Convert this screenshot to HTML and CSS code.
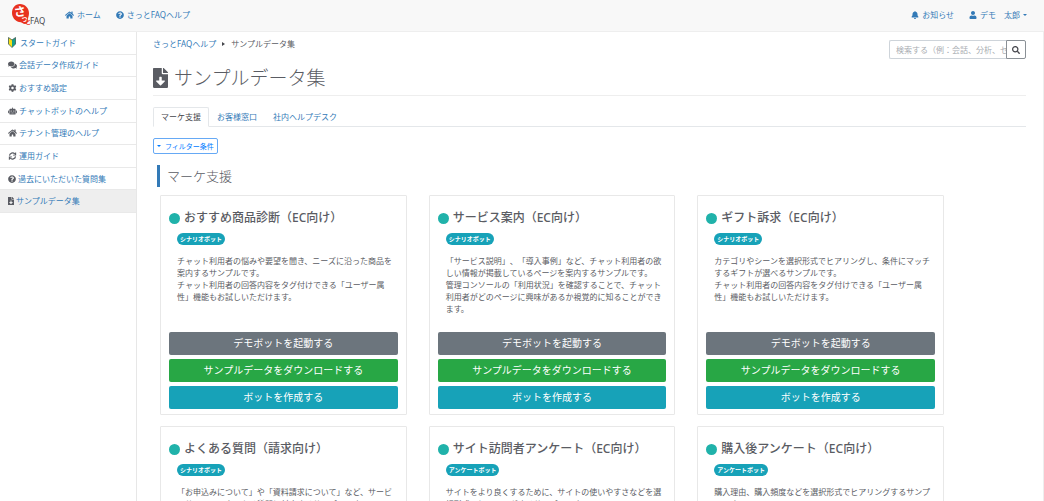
FILE: index.html
```
<!DOCTYPE html>
<html lang="ja">

<head>
    <meta charset="UTF-8">
    <meta name="viewport" content="width=device-width, initial-scale=1.0">
    <title>サンプルデータ集</title>
    <link rel="stylesheet" href="styles.css">
</head>

<body>
    <!-- icon set -->
    <svg class="icon-defs" aria-hidden="true">
        <symbol id="home" viewBox="0 0 576 512"><path d="M280.37 148.26L96 300.11V464a16 16 0 0 0 16 16l112.06-.29a16 16 0 0 0 15.92-16V368a16 16 0 0 1 16-16h64a16 16 0 0 1 16 16v95.64a16 16 0 0 0 16 16.05L464 480a16 16 0 0 0 16-16V300L295.67 148.26a12.19 12.19 0 0 0-15.3 0zM571.6 251.47L488 182.56V44.05a12 12 0 0 0-12-12h-56a12 12 0 0 0-12 12v72.61L318.47 43a48 48 0 0 0-61 0L4.34 251.47a12 12 0 0 0-1.6 16.9l25.5 31A12 12 0 0 0 45.15 301l235.22-193.74a12.19 12.19 0 0 1 15.3 0L530.9 301a12 12 0 0 0 16.9-1.6l25.5-31a12 12 0 0 0-1.7-16.93z"/></symbol>
        <symbol id="question" viewBox="0 0 512 512"><path d="M504 256c0 136.997-111.043 248-248 248S8 392.997 8 256C8 119.083 119.043 8 256 8s248 111.083 248 248zM262.655 90c-54.497 0-89.255 22.957-116.549 63.758-3.536 5.286-2.353 12.415 2.715 16.258l34.699 26.31c5.205 3.947 12.621 3.008 16.665-2.122 17.864-22.658 30.113-35.797 57.303-35.797 20.429 0 45.698 13.148 45.698 32.958 0 14.976-12.363 22.667-32.534 33.976C247.128 238.528 216 254.941 216 296v4c0 6.627 5.373 12 12 12h56c6.627 0 12-5.373 12-12v-1.333c0-28.462 83.186-29.647 83.186-106.667 0-58.002-60.165-102-116.531-102zM256 338c-25.365 0-46 20.635-46 46 0 25.364 20.635 46 46 46s46-20.636 46-46c0-25.365-20.635-46-46-46z"/></symbol>
        <symbol id="bell" viewBox="0 0 448 512"><path d="M224 512c35.32 0 63.97-28.65 63.97-64H160.03c0 35.35 28.65 64 63.97 64zm215.39-149.71c-19.32-20.76-55.47-51.99-55.47-154.29 0-77.7-54.48-139.9-127.94-155.16V32c0-17.67-14.32-32-31.98-32s-31.98 14.33-31.98 32v20.84C118.56 68.1 64.08 130.3 64.08 208c0 102.3-36.15 133.53-55.47 154.29-6 6.45-8.66 14.16-8.61 21.71.11 16.4 12.98 32 32.1 32h383.8c19.12 0 32-15.6 32.1-32 .05-7.55-2.61-15.27-8.61-21.71z"/></symbol>
        <symbol id="user" viewBox="0 0 448 512"><path d="M224 256c70.7 0 128-57.3 128-128S294.7 0 224 0 96 57.3 96 128s57.3 128 128 128zm89.6 32h-16.7c-22.2 10.2-46.9 16-72.9 16s-50.6-5.8-72.9-16h-16.7C60.2 288 0 348.2 0 422.4V464c0 26.5 21.5 48 48 48h352c26.5 0 48-21.5 48-48v-41.6c0-74.2-60.2-134.4-134.4-134.4z"/></symbol>
        <symbol id="comments" viewBox="0 0 576 512"><path d="M416 192c0-88.4-93.1-160-208-160S0 103.6 0 192c0 34.3 14.1 65.9 38 92-13.4 30.2-35.5 54.2-35.8 54.5-2.2 2.3-2.8 5.7-1.5 8.7S4.8 352 8 352c36.6 0 66.9-12.3 88.7-25 32.2 15.7 70.3 25 111.3 25 114.9 0 208-71.6 208-160zm122 220c23.9-26 38-57.7 38-92 0-66.9-53.5-124.2-129.3-148.1.9 6.6 1.3 13.3 1.3 20.1 0 105.9-107.7 192-240 192-10.8 0-21.3-.8-31.7-1.9C207.8 439.6 281.8 480 368 480c41 0 79.1-9.2 111.3-25 21.8 12.7 52.1 25 88.7 25 3.2 0 6.1-1.9 7.3-4.8 1.3-2.9.7-6.3-1.5-8.7-.3-.3-22.4-24.2-35.8-54.5z"/></symbol>
        <symbol id="cog" viewBox="0 0 512 512"><path d="M487.4 315.7l-42.6-24.6c4.3-23.2 4.3-47 0-70.2l42.6-24.6c4.9-2.8 7.1-8.6 5.5-14-11.1-35.6-30-67.8-54.7-94.6-3.8-4.1-10-5.1-14.8-2.3L380.8 110c-17.9-15.4-38.5-27.3-60.8-35.1V25.8c0-5.6-3.9-10.5-9.4-11.7-36.7-8.2-74.3-7.8-109.2 0-5.5 1.2-9.4 6.1-9.4 11.7V75c-22.2 7.9-42.8 19.8-60.8 35.1L88.7 85.5c-4.9-2.8-11-1.9-14.8 2.3-24.7 26.7-43.6 58.9-54.7 94.6-1.7 5.4.6 11.2 5.5 14L67.3 221c-4.3 23.2-4.3 47 0 70.2l-42.6 24.6c-4.9 2.8-7.1 8.6-5.5 14 11.1 35.6 30 67.8 54.7 94.6 3.8 4.1 10 5.1 14.8 2.3l42.6-24.6c17.9 15.4 38.5 27.3 60.8 35.1v49.2c0 5.6 3.9 10.5 9.4 11.7 36.7 8.2 74.3 7.8 109.2 0 5.5-1.2 9.4-6.1 9.4-11.7v-49.2c22.2-7.9 42.8-19.8 60.8-35.1l42.6 24.6c4.9 2.8 11 1.9 14.8-2.3 24.7-26.7 43.6-58.9 54.7-94.6 1.5-5.5-.7-11.3-5.6-14.1zM256 336c-44.1 0-80-35.9-80-80s35.9-80 80-80 80 35.9 80 80-35.9 80-80 80z"/></symbol>
        <symbol id="robot" viewBox="0 0 640 512"><path fill-rule="evenodd" d="M0 256v128c0 18 14 32 32 32h32V224H32c-18 0-32 14-32 32zM608 224h-32v192h32c18 0 32-14 32-32V256c0-18-14-32-32-32zM288 96V32a32 32 0 0 1 64 0v64h112c44 0 80 36 80 80v272c0 35-29 64-64 64H160c-35 0-64-29-64-64V176c0-44 36-80 80-80zM224 216a40 40 0 1 0 0 80 40 40 0 0 0 0-80zM416 216a40 40 0 1 0 0 80 40 40 0 0 0 0-80zM192 384h64v32h-64zM288 384h64v32h-64zM384 384h64v32h-64z"/></symbol>
        <symbol id="sync" viewBox="0 0 512 512"><path fill="none" stroke="currentColor" stroke-width="76" d="M62 235a195 195 0 0 1 345-104M450 277a195 195 0 0 1-345 104"/><path d="M490 24v194H286v-40l120-10 22-144zM22 488V294h204v40L106 344 84 488z"/></symbol>
        <symbol id="file" viewBox="0 0 384 512"><path d="M224 136V0H24C10.7 0 0 10.7 0 24v464c0 13.3 10.7 24 24 24h336c13.3 0 24-10.7 24-24V160H248c-13.2 0-24-10.8-24-24zm76.45 211.36l-96.42 95.7c-6.65 6.61-17.39 6.61-24.04 0l-96.42-95.7C73.42 337.29 80.54 320 94.82 320H160v-80c0-8.84 7.16-16 16-16h32c8.84 0 16 7.16 16 16v80h65.18c14.28 0 21.4 17.29 11.27 27.36zM377 105L279.1 7c-4.5-4.5-10.6-7-17-7H256v128h128v-6.1c0-6.3-2.5-12.4-7-16.9z"/></symbol>
        <symbol id="search" viewBox="0 0 512 512"><path d="M505 442.7L405.3 343c-4.5-4.5-10.6-7-17-7H372c27.6-35.3 44-79.7 44-128C416 93.1 322.9 0 208 0S0 93.1 0 208s93.1 208 208 208c48.3 0 92.7-16.4 128-44v16.3c0 6.4 2.5 12.5 7 17l99.7 99.7c9.4 9.4 24.6 9.4 33.9 0l28.3-28.3c9.4-9.4 9.4-24.6.1-34zM208 336c-70.7 0-128-57.2-128-128 0-70.7 57.2-128 128-128 70.7 0 128 57.2 128 128 0 70.7-57.2 128-128 128z"/></symbol>
        <symbol id="beginner" viewBox="0 0 16 22"><path fill="#f7e017" d="M1 1l7 5v15l-7-7z"/><path fill="#14a08c" d="M15 1L8 6v15l7-7z"/><path fill="none" stroke="#3d5a50" stroke-width="1.6" stroke-linejoin="round" d="M1 1l7 5 7-5v13l-7 7-7-7z"/></symbol>
    </svg>

    <header class="navbar">
        <a class="brand" href="#" aria-label="さっとFAQ">
            <svg class="brand-logo" viewBox="0 0 36 22">
                <path fill="#e8321f" d="M8 0c5 0 9 4 9 9 0 3-1 4-1 6 0 3-1 5-3 5-2 0-3-2-6-2-4-1-7-5-7-9 0-5 3-9 8-9z"/>
                <text class="logo-sa" x="2" y="12" transform="rotate(-8 8 8)">さ</text>
                <text class="logo-tsu" x="9" y="17">っ</text>
                <text class="logo-to" x="13" y="20">と</text>
                <text class="logo-faq" x="18" y="20">FAQ</text>
            </svg>
        </a>
        <nav class="nav-left">
            <a href="#"><svg class="icon icon-wide"><use href="#home"/></svg>ホーム</a>
            <a href="#"><svg class="icon"><use href="#question"/></svg>さっとFAQヘルプ</a>
        </nav>
        <nav class="nav-right">
            <a href="#"><svg class="icon"><use href="#bell"/></svg>お知らせ</a>
            <a href="#"><svg class="icon"><use href="#user"/></svg>デモ　太郎<span class="caret"></span></a>
        </nav>
    </header>

    <div class="wrapper">
        <aside class="sidebar">
            <ul class="side-menu">
                <li><a href="#"><svg class="icon icon-mark"><use href="#beginner"/></svg>スタートガイド</a></li>
                <li><a href="#"><svg class="icon icon-wide"><use href="#comments"/></svg>会話データ作成ガイド</a></li>
                <li><a href="#"><svg class="icon icon-wide"><use href="#cog"/></svg>おすすめ設定</a></li>
                <li><a href="#"><svg class="icon icon-wide"><use href="#robot"/></svg>チャットボットのヘルプ</a></li>
                <li><a href="#"><svg class="icon icon-wide"><use href="#home"/></svg>テナント管理のヘルプ</a></li>
                <li><a href="#"><svg class="icon icon-wide"><use href="#sync"/></svg>運用ガイド</a></li>
                <li><a href="#"><svg class="icon"><use href="#question"/></svg>過去にいただいた質問集</a></li>
                <li class="active"><a href="#"><svg class="icon icon-narrow"><use href="#file"/></svg>サンプルデータ集</a></li>
            </ul>
        </aside>

        <main class="content">
            <div class="content-top">
                <div class="breadcrumb">
                    <a href="#">さっとFAQヘルプ</a>
                    <span class="separator"></span>
                    <span>サンプルデータ集</span>
                </div>
                <form class="search">
                    <input type="text" aria-label="検索" placeholder="検索する（例：会話、分析、セッション）">
                    <button type="button" aria-label="検索する"><svg class="icon"><use href="#search"/></svg></button>
                </form>
            </div>

            <h1 class="page-title"><svg class="title-icon"><use href="#file"/></svg>サンプルデータ集</h1>

            <nav class="tabs">
                <a class="tab active" href="#">マーケ支援</a>
                <a class="tab" href="#">お客様窓口</a>
                <a class="tab" href="#">社内ヘルプデスク</a>
            </nav>

            <button type="button" class="btn-filter"><span class="caret"></span>フィルター条件</button>

            <h2 class="section-title">マーケ支援</h2>

            <div class="cards">
                <section class="card">
                    <h3><span class="dot"></span>おすすめ商品診断（EC向け）</h3>
                    <span class="badge">シナリオボット</span>
                    <p>チャット利用者の悩みや要望を聞き、ニーズに沿った商品を案内するサンプルです。<br>チャット利用者の回答内容をタグ付けできる「ユーザー属性」機能もお試しいただけます。</p>
                    <div class="card-buttons">
                        <button type="button" class="btn btn-demo">デモボットを起動する</button>
                        <button type="button" class="btn btn-download">サンプルデータをダウンロードする</button>
                        <button type="button" class="btn btn-create">ボットを作成する</button>
                    </div>
                </section>

                <section class="card">
                    <h3><span class="dot"></span>サービス案内（EC向け）</h3>
                    <span class="badge">シナリオボット</span>
                    <p>「サービス説明」、「導入事例」など、チャット利用者の欲しい情報が掲載しているページを案内するサンプルです。<br>管理コンソールの「利用状況」を確認することで、チャット利用者がどのページに興味があるか視覚的に知ることができます。</p>
                    <div class="card-buttons">
                        <button type="button" class="btn btn-demo">デモボットを起動する</button>
                        <button type="button" class="btn btn-download">サンプルデータをダウンロードする</button>
                        <button type="button" class="btn btn-create">ボットを作成する</button>
                    </div>
                </section>

                <section class="card">
                    <h3><span class="dot"></span>ギフト訴求（EC向け）</h3>
                    <span class="badge">シナリオボット</span>
                    <p>カテゴリやシーンを選択形式でヒアリングし、条件にマッチするギフトが選べるサンプルです。<br>チャット利用者の回答内容をタグ付けできる「ユーザー属性」機能もお試しいただけます。</p>
                    <div class="card-buttons">
                        <button type="button" class="btn btn-demo">デモボットを起動する</button>
                        <button type="button" class="btn btn-download">サンプルデータをダウンロードする</button>
                        <button type="button" class="btn btn-create">ボットを作成する</button>
                    </div>
                </section>

                <section class="card">
                    <h3><span class="dot"></span>よくある質問（請求向け）</h3>
                    <span class="badge">シナリオボット</span>
                    <p>「お申込みについて」や「資料請求について」など、サービスサイトでのよくある質問に対応するサンプルです。</p>
                    <div class="card-buttons">
                        <button type="button" class="btn btn-demo">デモボットを起動する</button>
                        <button type="button" class="btn btn-download">サンプルデータをダウンロードする</button>
                        <button type="button" class="btn btn-create">ボットを作成する</button>
                    </div>
                </section>

                <section class="card">
                    <h3><span class="dot"></span>サイト訪問者アンケート（EC向け）</h3>
                    <span class="badge">アンケートボット</span>
                    <p>サイトをより良くするために、サイトの使いやすさなどを選択形式でヒアリングするサンプルです。</p>
                    <div class="card-buttons">
                        <button type="button" class="btn btn-demo">デモボットを起動する</button>
                        <button type="button" class="btn btn-download">サンプルデータをダウンロードする</button>
                        <button type="button" class="btn btn-create">ボットを作成する</button>
                    </div>
                </section>

                <section class="card">
                    <h3><span class="dot"></span>購入後アンケート（EC向け）</h3>
                    <span class="badge">アンケートボット</span>
                    <p>購入理由、購入頻度などを選択形式でヒアリングするサンプルです。</p>
                    <div class="card-buttons">
                        <button type="button" class="btn btn-demo">デモボットを起動する</button>
                        <button type="button" class="btn btn-download">サンプルデータをダウンロードする</button>
                        <button type="button" class="btn btn-create">ボットを作成する</button>
                    </div>
                </section>
            </div>
        </main>
    </div>
</body>

</html>
```
FILE: styles.css
```
* {
    box-sizing: border-box;
}

body {
    margin: 0;
    background-color: #fff;
    color: #5a5c63;
    font-family: "Noto Sans", "Noto Sans CJK JP", sans-serif;
    font-size: 8px;
    line-height: 12px;
    text-spacing-trim: space-all;
}

a {
    color: #337ab7;
    text-decoration: none;
}

button, input {
    font-family: inherit;
    text-spacing-trim: inherit;
}

h1, h2, h3, p, ul {
    margin: 0;
    padding: 0;
}

.icon-defs {
    display: none;
}

.icon {
    width: 8px;
    height: 8px;
    fill: currentColor;
    flex-shrink: 0;
}

.icon-wide {
    width: 9px;
}

.icon-narrow {
    width: 6px;
}

.icon-mark {
    height: 11px;
    margin-right: 2px;
}

.caret {
    border-left: 2px solid transparent;
    border-right: 2px solid transparent;
    border-top: 2px solid currentColor;
}

/* header */
.navbar {
    display: flex;
    align-items: center;
    height: 32px;
    padding: 0 17px 1px 12px;
    background-color: #f8f8f8;
    border-bottom: 1px solid #eee;
}

.brand-logo {
    display: block;
    width: 36px;
    height: 22px;
    overflow: visible;
}

.logo-sa {
    font-size: 12px;
    font-weight: bold;
    fill: #fff;
}

.logo-tsu {
    font-size: 7px;
    font-weight: bold;
    fill: #fff;
}

.logo-to {
    font-size: 6px;
    font-weight: bold;
    fill: #e8321f;
}

.logo-faq {
    font-size: 8px;
    fill: #45464c;
}

.nav-left, .nav-right {
    display: flex;
    gap: 15px;
}

.nav-left {
    margin-left: 17px;
}

.nav-right {
    margin-left: auto;
}

.nav-left a, .nav-right a {
    display: flex;
    align-items: center;
    gap: 3px;
}

/* layout */
.wrapper {
    display: flex;
    border-right: 1px solid #eee;
}

.sidebar {
    flex: 0 0 137px;
    border-right: 1px solid #e7e7e7;
}

.side-menu {
    display: flex;
    flex-direction: column;
    height: 181px;
    list-style: none;
}

.side-menu li {
    flex: 1;
    display: flex;
    border-bottom: 1px solid #e9e9e9;
}

.side-menu a {
    flex: 1;
    display: flex;
    align-items: center;
    gap: 2px;
    padding-left: 8px;
}

.side-menu .icon {
    color: #5a5c63;
}

.side-menu .active {
    background-color: #eee;
}

.content {
    flex: 1;
    min-width: 0;
    padding: 8px 17px 16px 16px;
}

.content-top {
    display: flex;
    justify-content: space-between;
    align-items: flex-start;
}

.breadcrumb {
    display: flex;
    align-items: center;
    gap: 6px;
    line-height: 8px;
}

.separator {
    border-top: 2px solid transparent;
    border-bottom: 2px solid transparent;
    border-left: 3px solid #45464c;
}

.search {
    display: flex;
    height: 19px;
}

.search input {
    width: 117px;
    padding: 0 0 0 6px;
    border: 1px solid #ced4da;
    border-right: 0;
    border-radius: 2px 0 0 2px;
    font-size: 8px;
}

.search input::placeholder {
    color: #a9adb2;
}

.search button {
    display: flex;
    align-items: center;
    justify-content: center;
    width: 20px;
    padding: 0;
    border: 1px solid #8a9096;
    border-radius: 0 2px 2px 0;
    background-color: #fff;
    color: #45464c;
}

.page-title {
    display: flex;
    align-items: center;
    gap: 6px;
    padding: 5px 0 3px;
    border-bottom: 1px solid #eee;
    font-size: 19px;
    font-weight: 300;
    line-height: 28px;
}

.title-icon {
    width: 15px;
    height: 20px;
    fill: currentColor;
}

.tabs {
    display: flex;
    margin-top: 11px;
    border-bottom: 1px solid #e4e7ea;
}

.tab {
    margin-bottom: -1px;
    padding: 3px 7px;
    border: 1px solid transparent;
    border-radius: 2px 2px 0 0;
}

.tab.active {
    border-color: #e4e7ea #e4e7ea #fff;
    background-color: #fff;
    color: #45464c;
}

.btn-filter {
    display: flex;
    align-items: center;
    gap: 4px;
    height: 16px;
    margin-top: 11px;
    padding: 0 3px;
    border: 1px solid #66a9f5;
    border-radius: 2px;
    background-color: #fff;
    color: #007bff;
    font-size: 7px;
}

.section-title {
    margin: 11px 4px 8px;
    padding-left: 7px;
    border-left: 3px solid #337ab7;
    font-size: 13px;
    font-weight: 300;
    line-height: 22px;
}

/* cards */
.cards {
    display: grid;
    grid-template-columns: repeat(3, 1fr);
    gap: 11px 22px;
    width: 90%;
    max-width: 784px;
    margin-left: 7px;
}

.card {
    display: flex;
    flex-direction: column;
    align-items: flex-start;
    padding: 14px 8px 5px;
    border: 1px solid #e8e8e8;
    border-radius: 1px;
}

.card h3 {
    display: flex;
    align-items: center;
    gap: 4px;
    font-size: 12px;
    font-weight: 500;
    line-height: 16px;
}

.dot {
    width: 11px;
    height: 11px;
    border-radius: 50%;
    background-color: #20b2aa;
}

.badge {
    margin: 7px 0 10px 8px;
    padding: 0 3px;
    border-radius: 6px;
    background-color: #17a2b8;
    color: #fff;
    font-size: 6px;
    font-weight: bold;
    line-height: 12px;
}

.card p {
    margin-left: 8px;
}

.card-buttons {
    display: flex;
    flex-direction: column;
    gap: 4px;
    width: 100%;
    margin-top: auto;
    padding-top: 17px;
}

.btn {
    height: 23px;
    padding: 0 0 2px;
    border: 0;
    border-radius: 2px;
    color: #fff;
    font-size: 10px;
    cursor: pointer;
}

.btn-demo {
    background-color: #6c757d;
}

.btn-download {
    background-color: #28a745;
}

.btn-create {
    background-color: #17a2b8;
}
```
